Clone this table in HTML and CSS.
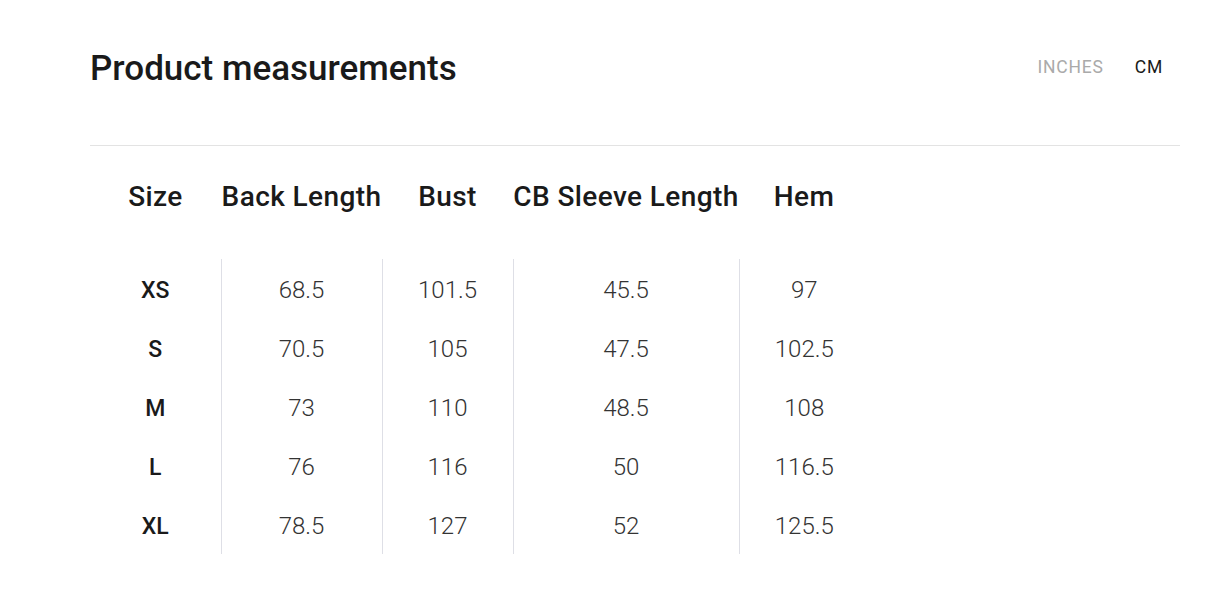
FILE: index.html
```html
<!DOCTYPE html>
<html>
<head>
<meta charset="utf-8">
<link rel="stylesheet" href="styles.css">
</head>
<body>
<div class="page">
  <div class="top">
    <h1 class="title">Product measurements</h1>
    <div class="units">
      <span class="unit">INCHES</span>
      <span class="unit active">CM</span>
    </div>
  </div>
  <div class="rule"></div>
  <table class="sizes">
    <thead>
      <tr>
        <th class="c1">Size</th>
        <th class="c2">Back Length</th>
        <th class="c3">Bust</th>
        <th class="c4">CB Sleeve Length</th>
        <th class="c5">Hem</th>
      </tr>
    </thead>
    <tbody>
      <tr><th>XS</th><td>68.5</td><td>101.5</td><td>45.5</td><td>97</td></tr>
      <tr><th>S</th><td>70.5</td><td>105</td><td>47.5</td><td>102.5</td></tr>
      <tr><th>M</th><td>73</td><td>110</td><td>48.5</td><td>108</td></tr>
      <tr><th>L</th><td>76</td><td>116</td><td>50</td><td>116.5</td></tr>
      <tr><th>XL</th><td>78.5</td><td>127</td><td>52</td><td>125.5</td></tr>
    </tbody>
  </table>
</div>
</body>
</html>
```
FILE: styles.css
```css
html, body {
  margin: 0;
  padding: 0;
  background: #fff;
}
body {
  font-family: Roboto, "Liberation Sans", sans-serif;
  color: #1a1a1a;
}
.page {
  padding: 0 32px 0 90px;
}
.top {
  display: flex;
  justify-content: space-between;
  align-items: flex-start;
  height: 145px;
}
.title {
  margin: 48px 0 0 0;
  font-size: 35px;
  font-weight: 500;
  line-height: 42px;
  letter-spacing: 0;
  color: #1a1a1a;
}
.units {
  display: flex;
  gap: 31px;
  margin-top: 56px;
  margin-right: 17px;
}
.unit {
  font-size: 17.5px;
  line-height: 22px;
  color: #aaaaaa;
  letter-spacing: 0.8px;
}
.unit.active {
  color: #1a1a1a;
}
.rule {
  height: 1px;
  background: #e3e3e3;
}
.sizes {
  border-collapse: collapse;
  margin-top: 30px;
}
.sizes th, .sizes td {
  padding: 0;
  text-align: center;
}
.sizes thead th {
  font-size: 28px;
  font-weight: 500;
  letter-spacing: 0.4px;
  height: 40px;
  padding-bottom: 43px;
  color: #1a1a1a;
}
.c1 { width: 131px; }
.c2 { width: 161px; }
.c3 { width: 131px; }
.c4 { width: 226px; }
.c5 { width: 130px; }
.sizes tbody th,
.sizes tbody td {
  height: 56px;
  padding-top: 3px;
}
.sizes tbody th {
  font-size: 23px;
  font-weight: 500;
  color: #1a1a1a;
}
.sizes tbody td {
  font-size: 24px;
  font-weight: 300;
  color: #333;
  border-left: 1px solid #dedfe6;
}
```
